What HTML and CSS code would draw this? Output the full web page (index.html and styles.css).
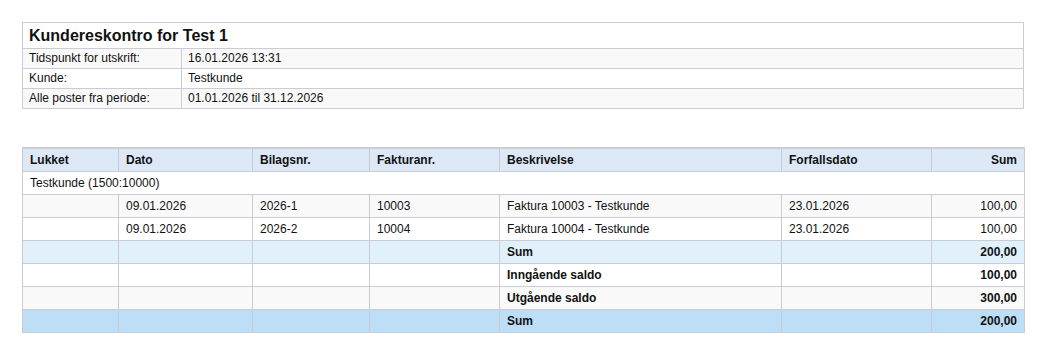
FILE: index.html
```html
<!DOCTYPE html>
<html lang="no">
<head>
<meta charset="utf-8">
<title>Kundereskontro for Test 1</title>
<link rel="stylesheet" href="styles.css">
</head>
<body>
<div class="page">
  <table class="info">
    <colgroup><col class="c-label"><col></colgroup>
    <tr class="title-row"><th colspan="2">Kundereskontro for Test 1</th></tr>
    <tr class="alt"><td>Tidspunkt for utskrift:</td><td>16.01.2026 13:31</td></tr>
    <tr><td>Kunde:</td><td>Testkunde</td></tr>
    <tr class="alt"><td>Alle poster fra periode:</td><td>01.01.2026 til 31.12.2026</td></tr>
  </table>

  <table class="ledger">
    <colgroup>
      <col class="w1"><col class="w2"><col class="w3"><col class="w4"><col class="w5"><col class="w6"><col class="w7">
    </colgroup>
    <thead>
      <tr><th>Lukket</th><th>Dato</th><th>Bilagsnr.</th><th>Fakturanr.</th><th>Beskrivelse</th><th>Forfallsdato</th><th class="num">Sum</th></tr>
    </thead>
    <tbody>
      <tr class="group"><td colspan="7">Testkunde (1500:10000)</td></tr>
      <tr class="alt"><td></td><td>09.01.2026</td><td>2026-1</td><td>10003</td><td>Faktura 10003 - Testkunde</td><td>23.01.2026</td><td class="num">100,00</td></tr>
      <tr><td></td><td>09.01.2026</td><td>2026-2</td><td>10004</td><td>Faktura 10004 - Testkunde</td><td>23.01.2026</td><td class="num">100,00</td></tr>
      <tr class="subtotal b"><td></td><td></td><td></td><td></td><td>Sum</td><td></td><td class="num">200,00</td></tr>
      <tr class="b"><td></td><td></td><td></td><td></td><td>Inngående saldo</td><td></td><td class="num">100,00</td></tr>
      <tr class="alt b"><td></td><td></td><td></td><td></td><td>Utgående saldo</td><td></td><td class="num">300,00</td></tr>
      <tr class="total b"><td></td><td></td><td></td><td></td><td>Sum</td><td></td><td class="num">200,00</td></tr>
    </tbody>
  </table>
</div>
</body>
</html>
```
FILE: styles.css
```css
html, body {
  margin: 0;
  padding: 0;
  background: #ffffff;
}
body {
  font-family: "Liberation Sans", Arial, sans-serif;
  font-size: 12px;
  color: #111;
}
.page {
  padding: 22px 18px 0 22px;
  display: flex;
  flex-direction: column;
  gap: 38px;
}
table {
  border-collapse: collapse;
  width: 1002px;
  table-layout: fixed;
}
td, th {
  border: 1px solid #c9cdd3;
  text-align: left;
  white-space: nowrap;
  overflow: hidden;
}
.info .c-label { width: 159px; }
.info td {
  height: 19px;
  padding: 0 6px;
  line-height: 19px;
}
.info .title-row th {
  font-size: 16px;
  font-weight: bold;
  height: 25px;
  padding: 0 6px;
  line-height: 25px;
  background: #fff;
}
.alt td { background: #f9f9f9; }

.ledger .w1 { width: 96px; }
.ledger .w2 { width: 134px; }
.ledger .w3 { width: 117px; }
.ledger .w4 { width: 130px; }
.ledger .w5 { width: 282px; }
.ledger .w6 { width: 150px; }
.ledger .w7 { width: 93px; }
.ledger th {
  background: #dde8f7;
  font-weight: bold;
  height: 22px;
  padding: 0 7px;
  border-top: 2px solid #c9cdd3;
}
.ledger td {
  height: 22px;
  padding: 0 7px;
}
.ledger .num { text-align: right; }
.ledger .b td { font-weight: bold; }
.ledger .subtotal td { background: #e1f1fc; }
.ledger .total td { background: #bcdef7; }
```
